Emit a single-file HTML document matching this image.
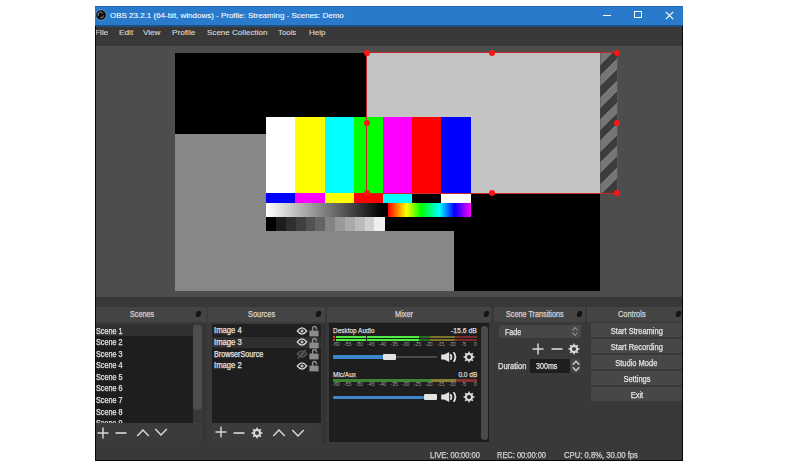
<!DOCTYPE html>
<html><head><meta charset="utf-8">
<style>
#wrap{position:absolute;left:0;top:0;width:800px;height:466px;overflow:hidden;filter:blur(0.45px)}
*{margin:0;padding:0;box-sizing:border-box}
html,body{width:800px;height:466px;overflow:hidden;background:#fff}
body{position:relative;font-family:"Liberation Sans",sans-serif}
.a{position:absolute}
.t{position:absolute;white-space:pre;line-height:1;transform-origin:0 0}
</style></head><body>
<div id="wrap">
<div class="a" style="left:95.00px;top:6.00px;width:588.00px;height:455.00px;background:#393939;"></div>
<div class="a" style="left:95.00px;top:6.00px;width:588.00px;height:20.00px;background:#2a7acb;"></div>
<div class="a" style="left:95.00px;top:6.00px;width:588.00px;height:0.80px;background:#1f67b5;"></div>
<div class="a" style="left:95.00px;top:25.40px;width:588.00px;height:1.20px;background:#1d4f80;"></div>
<svg class="a" style="left:95px;top:9px" width="12" height="12"><circle cx="6" cy="6" r="5.3" fill="#0d0d0d" stroke="#7aa6d8" stroke-width="0.8"/><path d="M4.2 3.2Q6.8 2.6 7.6 4.6M8.6 6.6Q7.6 9 5.2 8.8M3.2 7Q2.6 4.8 4 3.8" fill="none" stroke="#8a8a8a" stroke-width="1.1"/></svg>
<div class="t" style="left:109.75px;top:11.71px;font-size:7.6px;color:#ffffff;transform:scaleX(1.0512);-webkit-text-stroke:0.08px #ffffff;">OBS 23.2.1 (64-bit, windows) - Profile: Streaming - Scenes: Demo</div>
<div class="a" style="left:603.00px;top:14.60px;width:7.80px;height:1.00px;background:#ffffff;"></div>
<div class="a" style="left:633.8px;top:11.4px;width:8px;height:6.6px;border:1px solid #fff"></div>
<svg class="a" style="left:665px;top:10.5px" width="9" height="9"><path d="M0.8 0.8L8.2 8.2M8.2 0.8L0.8 8.2" stroke="#fff" stroke-width="1.1"/></svg>
<div class="a" style="left:95.00px;top:26.60px;width:588.00px;height:19.40px;background:#383838;"></div>
<div class="t" style="left:118.50px;top:28.51px;font-size:8px;color:#d9d9d9;transform:scaleX(1.0301);-webkit-text-stroke:0.12px #d9d9d9;">Edit</div>
<div class="t" style="left:143.00px;top:28.51px;font-size:8px;color:#d9d9d9;transform:scaleX(1.0092);-webkit-text-stroke:0.12px #d9d9d9;">View</div>
<div class="t" style="left:171.70px;top:28.51px;font-size:8px;color:#d9d9d9;transform:scaleX(1.0275);-webkit-text-stroke:0.12px #d9d9d9;">Profile</div>
<div class="t" style="left:206.50px;top:28.51px;font-size:8px;color:#d9d9d9;transform:scaleX(1.0061);-webkit-text-stroke:0.12px #d9d9d9;">Scene Collection</div>
<div class="t" style="left:278.10px;top:28.51px;font-size:8px;color:#d9d9d9;transform:scaleX(0.9789);-webkit-text-stroke:0.12px #d9d9d9;">Tools</div>
<div class="t" style="left:308.50px;top:28.51px;font-size:8px;color:#d9d9d9;transform:scaleX(1.0028);-webkit-text-stroke:0.12px #d9d9d9;">Help</div>
<div class="t" style="left:94.60px;top:28.51px;font-size:8px;color:#d9d9d9;transform:scaleX(1.0395);-webkit-text-stroke:0.12px #d9d9d9;">File</div>
<div class="a" style="left:95.00px;top:46.00px;width:588.00px;height:251.00px;background:#4d4d4d;"></div>
<div class="a" style="left:175.00px;top:53.00px;width:425.40px;height:238.00px;background:#000000;"></div>
<div class="a" style="left:175.00px;top:134.00px;width:279.00px;height:157.00px;background:#878787;"></div>
<div class="a" style="left:367.00px;top:53.00px;width:233.40px;height:140.00px;background:#c4c4c4;"></div>
<div class="a" style="left:600.4px;top:53px;width:16.6px;height:158.3px;clip-path:inset(0 0 18.3px 0);background:repeating-linear-gradient(-45deg,#3c3c3c 0 7.4px,#767676 7.4px 15.4px)"></div>
<div class="a" style="left:266.20px;top:116.60px;width:29.50px;height:76.10px;background:#ffffff;"></div>
<div class="a" style="left:295.40px;top:116.60px;width:29.50px;height:76.10px;background:#ffff00;"></div>
<div class="a" style="left:324.60px;top:116.60px;width:29.50px;height:76.10px;background:#00ffff;"></div>
<div class="a" style="left:353.80px;top:116.60px;width:29.50px;height:76.10px;background:#00ff00;"></div>
<div class="a" style="left:383.00px;top:116.60px;width:29.50px;height:76.10px;background:#ff00ff;"></div>
<div class="a" style="left:412.20px;top:116.60px;width:29.50px;height:76.10px;background:#ff0000;"></div>
<div class="a" style="left:441.40px;top:116.60px;width:29.50px;height:76.10px;background:#0000ff;"></div>
<div class="a" style="left:266.20px;top:192.70px;width:29.50px;height:9.90px;background:#0000ff;"></div>
<div class="a" style="left:295.40px;top:192.70px;width:29.50px;height:9.90px;background:#ff00ff;"></div>
<div class="a" style="left:324.60px;top:192.70px;width:29.50px;height:9.90px;background:#ffff00;"></div>
<div class="a" style="left:353.80px;top:192.70px;width:29.50px;height:9.90px;background:#ff0000;"></div>
<div class="a" style="left:383.00px;top:192.70px;width:29.50px;height:9.90px;background:#00ffff;"></div>
<div class="a" style="left:412.20px;top:192.70px;width:29.50px;height:9.90px;background:#000000;"></div>
<div class="a" style="left:441.40px;top:192.70px;width:29.50px;height:9.90px;background:#ffffff;"></div>
<div class="a" style="left:266.20px;top:202.60px;width:204.40px;height:28.80px;background:#000000;"></div>
<div class="a" style="left:266.20px;top:202.60px;width:117.30px;height:14.00px;background:#fff;background:linear-gradient(90deg,#fff,#000)"></div>
<div class="a" style="left:388.00px;top:202.60px;width:82.60px;height:14.00px;background:#f00;background:linear-gradient(90deg,#f00,#ff0 22%,#0f0 40%,#0ff 62%,#00f 80%,#f0f)"></div>
<div class="a" style="left:266.20px;top:216.80px;width:10.14px;height:14.60px;background:#000;"></div>
<div class="a" style="left:276.04px;top:216.80px;width:10.14px;height:14.60px;background:#1c1c1c;"></div>
<div class="a" style="left:285.88px;top:216.80px;width:10.14px;height:14.60px;background:#2e2e2e;"></div>
<div class="a" style="left:295.73px;top:216.80px;width:10.14px;height:14.60px;background:#404040;"></div>
<div class="a" style="left:305.57px;top:216.80px;width:10.14px;height:14.60px;background:#525252;"></div>
<div class="a" style="left:315.41px;top:216.80px;width:10.14px;height:14.60px;background:#646464;"></div>
<div class="a" style="left:325.25px;top:216.80px;width:10.14px;height:14.60px;background:#838383;"></div>
<div class="a" style="left:335.09px;top:216.80px;width:10.14px;height:14.60px;background:#999;"></div>
<div class="a" style="left:344.93px;top:216.80px;width:10.14px;height:14.60px;background:#aaa;"></div>
<div class="a" style="left:354.77px;top:216.80px;width:10.14px;height:14.60px;background:#bbb;"></div>
<div class="a" style="left:364.62px;top:216.80px;width:10.14px;height:14.60px;background:#d0d0d0;"></div>
<div class="a" style="left:374.46px;top:216.80px;width:10.14px;height:14.60px;background:#eee;"></div>
<div class="a" style="left:366.2px;top:52.2px;width:251.6px;height:141.6px;border:1.7px solid #c82828"></div>
<div class="a" style="left:363.9px;top:49.9px;width:6.2px;height:6.2px;border-radius:50%;background:#ff1414"></div>
<div class="a" style="left:363.9px;top:119.9px;width:6.2px;height:6.2px;border-radius:50%;background:#ff1414"></div>
<div class="a" style="left:363.9px;top:189.9px;width:6.2px;height:6.2px;border-radius:50%;background:#ff1414"></div>
<div class="a" style="left:488.9px;top:49.9px;width:6.2px;height:6.2px;border-radius:50%;background:#ff1414"></div>
<div class="a" style="left:488.9px;top:189.9px;width:6.2px;height:6.2px;border-radius:50%;background:#ff1414"></div>
<div class="a" style="left:613.9px;top:49.9px;width:6.2px;height:6.2px;border-radius:50%;background:#ff1414"></div>
<div class="a" style="left:613.9px;top:119.9px;width:6.2px;height:6.2px;border-radius:50%;background:#ff1414"></div>
<div class="a" style="left:613.9px;top:189.9px;width:6.2px;height:6.2px;border-radius:50%;background:#ff1414"></div>
<div class="a" style="left:95.00px;top:297.00px;width:588.00px;height:9.60px;background:#383838;"></div>
<div class="a" style="left:95.00px;top:307.00px;width:112.00px;height:14.80px;background:#444444;"></div>
<div class="a" style="left:208.00px;top:307.00px;width:116.50px;height:14.80px;background:#444444;"></div>
<div class="a" style="left:326.80px;top:307.00px;width:164.20px;height:14.80px;background:#444444;"></div>
<div class="a" style="left:494.00px;top:307.00px;width:91.00px;height:14.80px;background:#444444;"></div>
<div class="a" style="left:587.00px;top:307.00px;width:95.00px;height:14.80px;background:#444444;"></div>
<div class="t" style="left:129.75px;top:309.86px;font-size:8.3px;color:#d4d4d4;transform:scaleX(0.8669);-webkit-text-stroke:0.25px #d4d4d4;">Scenes</div>
<div class="t" style="left:247.50px;top:309.86px;font-size:8.3px;color:#d4d4d4;transform:scaleX(0.8900);-webkit-text-stroke:0.25px #d4d4d4;">Sources</div>
<div class="t" style="left:395.00px;top:309.86px;font-size:8.3px;color:#d4d4d4;transform:scaleX(0.8872);-webkit-text-stroke:0.25px #d4d4d4;">Mixer</div>
<div class="t" style="left:506.00px;top:309.86px;font-size:8.3px;color:#d4d4d4;transform:scaleX(0.8731);-webkit-text-stroke:0.25px #d4d4d4;">Scene Transitions</div>
<div class="t" style="left:618.00px;top:309.86px;font-size:8.3px;color:#d4d4d4;transform:scaleX(0.8930);-webkit-text-stroke:0.25px #d4d4d4;">Controls</div>
<div class="a" style="left:196.3px;top:310.8px;width:4.8px;height:6px;background:#141414;border-radius:2px;transform:skewX(-12deg)"></div>
<div class="a" style="left:315.5px;top:310.8px;width:4.8px;height:6px;background:#141414;border-radius:2px;transform:skewX(-12deg)"></div>
<div class="a" style="left:483.9px;top:310.8px;width:4.8px;height:6px;background:#141414;border-radius:2px;transform:skewX(-12deg)"></div>
<div class="a" style="left:576.6px;top:310.8px;width:4.8px;height:6px;background:#141414;border-radius:2px;transform:skewX(-12deg)"></div>
<div class="a" style="left:676.2px;top:310.8px;width:4.8px;height:6px;background:#141414;border-radius:2px;transform:skewX(-12deg)"></div>
<div class="a" style="left:95.00px;top:323.60px;width:97.60px;height:99.40px;background:#1e1e1e;"></div>
<div class="a" style="left:95.00px;top:323.60px;width:97.60px;height:12.90px;background:#303030;"></div>
<div class="a" style="left:95px;top:323px;width:97.6px;height:100px;overflow:hidden">
<div class="t" style="left:1.00px;top:3.86px;font-size:8.3px;color:#e3e3e3;transform:scaleX(0.8734);-webkit-text-stroke:0.25px #e3e3e3;">Scene 1</div>
<div class="t" style="left:1.00px;top:14.86px;font-size:8.3px;color:#e3e3e3;transform:scaleX(0.8734);-webkit-text-stroke:0.25px #e3e3e3;">Scene 2</div>
<div class="t" style="left:1.00px;top:26.86px;font-size:8.3px;color:#e3e3e3;transform:scaleX(0.8734);-webkit-text-stroke:0.25px #e3e3e3;">Scene 3</div>
<div class="t" style="left:1.00px;top:37.86px;font-size:8.3px;color:#e3e3e3;transform:scaleX(0.8734);-webkit-text-stroke:0.25px #e3e3e3;">Scene 4</div>
<div class="t" style="left:1.00px;top:49.86px;font-size:8.3px;color:#e3e3e3;transform:scaleX(0.8734);-webkit-text-stroke:0.25px #e3e3e3;">Scene 5</div>
<div class="t" style="left:1.00px;top:60.86px;font-size:8.3px;color:#e3e3e3;transform:scaleX(0.8734);-webkit-text-stroke:0.25px #e3e3e3;">Scene 6</div>
<div class="t" style="left:1.00px;top:72.86px;font-size:8.3px;color:#e3e3e3;transform:scaleX(0.8734);-webkit-text-stroke:0.25px #e3e3e3;">Scene 7</div>
<div class="t" style="left:1.00px;top:84.86px;font-size:8.3px;color:#e3e3e3;transform:scaleX(0.8734);-webkit-text-stroke:0.25px #e3e3e3;">Scene 8</div>
<div class="t" style="left:1.00px;top:95.86px;font-size:8.3px;color:#e3e3e3;transform:scaleX(0.8734);-webkit-text-stroke:0.25px #e3e3e3;">Scene 9</div>
</div>
<div class="a" style="left:192.60px;top:323.60px;width:9.90px;height:99.40px;background:#383838;"></div>
<div class="a" style="left:192.80px;top:325.00px;width:9.00px;height:84.80px;background:#4d4d4d;border-radius:4px"></div>
<div class="a" style="left:95.00px;top:423.00px;width:107.50px;height:18.50px;background:#3b3b3b;"></div>
<div class="a" style="left:202.50px;top:323.60px;width:1.00px;height:117.90px;background:#303030;"></div>
<div class="a" style="left:211.60px;top:323.70px;width:109.00px;height:99.30px;background:#1e1e1e;"></div>
<div class="a" style="left:211.60px;top:323.70px;width:109.00px;height:12.10px;background:#212121;"></div>
<div class="a" style="left:211.60px;top:336.50px;width:109.00px;height:11.30px;background:#2f2f2f;"></div>
<div class="t" style="left:214.20px;top:325.86px;font-size:8.3px;color:#e3e3e3;transform:scaleX(0.9253);-webkit-text-stroke:0.25px #e3e3e3;">Image 4</div>
<div class="t" style="left:214.20px;top:337.86px;font-size:8.3px;color:#e3e3e3;transform:scaleX(0.9253);-webkit-text-stroke:0.25px #e3e3e3;">Image 3</div>
<div class="t" style="left:214.20px;top:349.86px;font-size:8.3px;color:#e3e3e3;transform:scaleX(0.8689);-webkit-text-stroke:0.25px #e3e3e3;">BrowserSource</div>
<div class="t" style="left:214.20px;top:360.86px;font-size:8.3px;color:#e3e3e3;transform:scaleX(0.9253);-webkit-text-stroke:0.25px #e3e3e3;">Image 2</div>
<div class="a" style="left:211.40px;top:423.00px;width:109.35px;height:18.50px;background:#3b3b3b;"></div>
<div class="a" style="left:329.30px;top:323.40px;width:159.45px;height:118.80px;background:#1e1e1e;"></div>
<div class="a" style="left:480.60px;top:326.00px;width:7.20px;height:114.00px;background:#4a4a4a;border-radius:3.5px"></div>
<div class="a" style="left:202.60px;top:323.60px;width:3.20px;height:118.40px;background:#353535;"></div>
<div class="a" style="left:322.40px;top:323.60px;width:3.40px;height:118.40px;background:#333333;"></div>
<div class="a" style="left:95.00px;top:26.00px;width:1.20px;height:435.00px;background:#050505;"></div>
<div class="a" style="left:681.80px;top:26.00px;width:1.20px;height:435.00px;background:#050505;"></div>
<div class="a" style="left:95.00px;top:459.70px;width:588.00px;height:1.30px;background:#050505;"></div>
<svg class="a" style="left:95.8px;top:425.5px" width="14" height="14"><path d="M1.5 7H12.5M7 1.5V12.5" stroke="#d8d8d8" stroke-width="1.45"/></svg>
<svg class="a" style="left:113.5px;top:425.5px" width="14" height="14"><path d="M1.5 7H12.5" stroke="#d8d8d8" stroke-width="1.6"/></svg>
<svg class="a" style="left:135.7px;top:425.5px" width="14" height="14"><path d="M1.25 10.00L7 4.00L12.75 10.00" fill="none" stroke="#d8d8d8" stroke-width="1.45"/></svg>
<svg class="a" style="left:153.7px;top:425.0px" width="14" height="14"><path d="M1.25 4.00L7 10.00L12.75 4.00" fill="none" stroke="#d8d8d8" stroke-width="1.45"/></svg>
<svg class="a" style="left:214.3px;top:425.2px" width="14" height="14"><path d="M1.5 7H12.5M7 1.5V12.5" stroke="#d8d8d8" stroke-width="1.45"/></svg>
<svg class="a" style="left:232.0px;top:425.6px" width="14" height="14"><path d="M1.5 7H12.5" stroke="#d8d8d8" stroke-width="1.6"/></svg>
<svg class="a" style="left:250.4px;top:425.6px" width="14" height="14"><path d="M6.04 3.01 L6.52 1.42 L7.48 1.42 L7.96 3.01 L9.14 3.50 L10.60 2.71 L11.29 3.40 L10.50 4.86 L10.99 6.04 L12.58 6.52 L12.58 7.48 L10.99 7.96 L10.50 9.14 L11.29 10.60 L10.60 11.29 L9.14 10.50 L7.96 10.99 L7.48 12.58 L6.52 12.58 L6.04 10.99 L4.86 10.50 L3.40 11.29 L2.71 10.60 L3.50 9.14 L3.01 7.96 L1.42 7.48 L1.42 6.52 L3.01 6.04 L3.50 4.86 L2.71 3.40 L3.40 2.71 L4.86 3.50Z M9.0 7 A2.0 2.0 0 1 0 5.0 7 A2.0 2.0 0 1 0 9.0 7Z" fill="#d8d8d8" fill-rule="evenodd"/></svg>
<svg class="a" style="left:272.2px;top:426.0px" width="14" height="14"><path d="M1.25 10.00L7 4.00L12.75 10.00" fill="none" stroke="#d8d8d8" stroke-width="1.45"/></svg>
<svg class="a" style="left:290.5px;top:425.7px" width="14" height="14"><path d="M1.25 4.00L7 10.00L12.75 4.00" fill="none" stroke="#d8d8d8" stroke-width="1.45"/></svg>
<svg class="a" style="left:294.9px;top:325.8px" width="14" height="10"><path d="M1.4 5Q7 -2.4 12.6 5Q7 12.4 1.4 5Z" fill="#e0e0e0"/><path d="M3.2 5Q7 0.2 10.8 5Q7 9.8 3.2 5Z" fill="#262626"/><circle cx="7" cy="5" r="2.0" fill="#6a6a6a"/><circle cx="7" cy="5" r="0.9" fill="#e0e0e0"/></svg>
<svg class="a" style="left:309.0px;top:325.0px" width="10" height="12"><path d="M3.6 6V3.4A1.9 1.9 0 0 1 7.4 3.4V4.4" fill="none" stroke="#8c8c8c" stroke-width="1.5"/><rect x="0.4" y="5.6" width="9.2" height="5.8" fill="#8c8c8c"/></svg>
<svg class="a" style="left:294.9px;top:337.4px" width="14" height="10"><path d="M1.4 5Q7 -2.4 12.6 5Q7 12.4 1.4 5Z" fill="#e0e0e0"/><path d="M3.2 5Q7 0.2 10.8 5Q7 9.8 3.2 5Z" fill="#262626"/><circle cx="7" cy="5" r="2.0" fill="#6a6a6a"/><circle cx="7" cy="5" r="0.9" fill="#e0e0e0"/></svg>
<svg class="a" style="left:309.0px;top:336.6px" width="10" height="12"><path d="M3.6 6V3.4A1.9 1.9 0 0 1 7.4 3.4V4.4" fill="none" stroke="#8c8c8c" stroke-width="1.5"/><rect x="0.4" y="5.6" width="9.2" height="5.8" fill="#8c8c8c"/></svg>
<svg class="a" style="left:294.9px;top:349.0px" width="14" height="10"><path d="M1.4 5Q7 -2.4 12.6 5Q7 12.4 1.4 5Z" fill="#5a5a5a"/><path d="M3.2 5Q7 0.2 10.8 5Q7 9.8 3.2 5Z" fill="#262626"/><circle cx="7" cy="5" r="2.0" fill="#3a3a3a"/><circle cx="7" cy="5" r="0.9" fill="#5a5a5a"/><path d="M3 9.5L11 0.8" stroke="#5a5a5a" stroke-width="1.3"/></svg>
<svg class="a" style="left:309.0px;top:348.2px" width="10" height="12"><path d="M3.6 6V3.4A1.9 1.9 0 0 1 7.4 3.4V4.4" fill="none" stroke="#8c8c8c" stroke-width="1.5"/><rect x="0.4" y="5.6" width="9.2" height="5.8" fill="#8c8c8c"/></svg>
<svg class="a" style="left:294.9px;top:360.6px" width="14" height="10"><path d="M1.4 5Q7 -2.4 12.6 5Q7 12.4 1.4 5Z" fill="#e0e0e0"/><path d="M3.2 5Q7 0.2 10.8 5Q7 9.8 3.2 5Z" fill="#262626"/><circle cx="7" cy="5" r="2.0" fill="#6a6a6a"/><circle cx="7" cy="5" r="0.9" fill="#e0e0e0"/></svg>
<svg class="a" style="left:309.0px;top:359.8px" width="10" height="12"><path d="M3.6 6V3.4A1.9 1.9 0 0 1 7.4 3.4V4.4" fill="none" stroke="#8c8c8c" stroke-width="1.5"/><rect x="0.4" y="5.6" width="9.2" height="5.8" fill="#8c8c8c"/></svg>
<div class="t" style="left:333.00px;top:326.81px;font-size:7.4px;color:#dcdcdc;transform:scaleX(0.8727);-webkit-text-stroke:0.25px #dcdcdc;">Desktop Audio</div>
<div class="t" style="left:449.03px;top:326.81px;font-size:7.4px;color:#dcdcdc;transform-origin:100% 0;transform:scaleX(0.9294);-webkit-text-stroke:0.25px #dcdcdc;">-15.6 dB</div>
<div class="a" style="left:332.80px;top:335.70px;width:2.50px;height:2.70px;background:#e03a3a;"></div>
<div class="a" style="left:336.20px;top:335.70px;width:29.50px;height:2.70px;background:#4ded42;"></div>
<div class="a" style="left:367.40px;top:335.70px;width:51.90px;height:2.70px;background:#4ded42;"></div>
<div class="a" style="left:419.30px;top:335.70px;width:10.70px;height:2.70px;background:#2c6a28;"></div>
<div class="a" style="left:430.00px;top:335.70px;width:25.00px;height:2.70px;background:#7a7228;"></div>
<div class="a" style="left:455.00px;top:335.70px;width:22.00px;height:2.70px;background:#7a2a2a;"></div>
<div class="a" style="left:332.80px;top:338.90px;width:2.50px;height:2.60px;background:#e03a3a;"></div>
<div class="a" style="left:336.20px;top:338.90px;width:29.50px;height:2.60px;background:#4ded42;"></div>
<div class="a" style="left:367.40px;top:338.90px;width:51.90px;height:2.60px;background:#4ded42;"></div>
<div class="a" style="left:419.30px;top:338.90px;width:10.70px;height:2.60px;background:#2c6a28;"></div>
<div class="a" style="left:430.00px;top:338.90px;width:25.00px;height:2.60px;background:#7a7228;"></div>
<div class="a" style="left:455.00px;top:338.90px;width:22.00px;height:2.60px;background:#7a2a2a;"></div>
<div class="a" style="left:335.60px;top:341.60px;width:0.80px;height:1.80px;background:#8a8a8a;"></div>
<div class="t" style="left:332.24px;top:342.41px;font-size:5.2px;color:#949494;transform-origin:50% 0;transform:scaleX(1.0000);">-60</div>
<div class="a" style="left:347.22px;top:341.60px;width:0.80px;height:1.80px;background:#8a8a8a;"></div>
<div class="t" style="left:343.86px;top:342.41px;font-size:5.2px;color:#949494;transform-origin:50% 0;transform:scaleX(1.0000);">-55</div>
<div class="a" style="left:358.84px;top:341.60px;width:0.80px;height:1.80px;background:#8a8a8a;"></div>
<div class="t" style="left:355.48px;top:342.41px;font-size:5.2px;color:#949494;transform-origin:50% 0;transform:scaleX(1.0000);">-50</div>
<div class="a" style="left:370.46px;top:341.60px;width:0.80px;height:1.80px;background:#8a8a8a;"></div>
<div class="t" style="left:367.10px;top:342.41px;font-size:5.2px;color:#949494;transform-origin:50% 0;transform:scaleX(1.0000);">-45</div>
<div class="a" style="left:382.08px;top:341.60px;width:0.80px;height:1.80px;background:#8a8a8a;"></div>
<div class="t" style="left:378.72px;top:342.41px;font-size:5.2px;color:#949494;transform-origin:50% 0;transform:scaleX(1.0000);">-40</div>
<div class="a" style="left:393.70px;top:341.60px;width:0.80px;height:1.80px;background:#8a8a8a;"></div>
<div class="t" style="left:390.34px;top:342.41px;font-size:5.2px;color:#949494;transform-origin:50% 0;transform:scaleX(1.0000);">-35</div>
<div class="a" style="left:405.32px;top:341.60px;width:0.80px;height:1.80px;background:#8a8a8a;"></div>
<div class="t" style="left:401.96px;top:342.41px;font-size:5.2px;color:#949494;transform-origin:50% 0;transform:scaleX(1.0000);">-30</div>
<div class="a" style="left:416.94px;top:341.60px;width:0.80px;height:1.80px;background:#8a8a8a;"></div>
<div class="t" style="left:413.58px;top:342.41px;font-size:5.2px;color:#949494;transform-origin:50% 0;transform:scaleX(1.0000);">-25</div>
<div class="a" style="left:428.56px;top:341.60px;width:0.80px;height:1.80px;background:#8a8a8a;"></div>
<div class="t" style="left:425.20px;top:342.41px;font-size:5.2px;color:#949494;transform-origin:50% 0;transform:scaleX(1.0000);">-20</div>
<div class="a" style="left:440.18px;top:341.60px;width:0.80px;height:1.80px;background:#8a8a8a;"></div>
<div class="t" style="left:436.82px;top:342.41px;font-size:5.2px;color:#949494;transform-origin:50% 0;transform:scaleX(1.0000);">-15</div>
<div class="a" style="left:451.80px;top:341.60px;width:0.80px;height:1.80px;background:#8a8a8a;"></div>
<div class="t" style="left:448.44px;top:342.41px;font-size:5.2px;color:#949494;transform-origin:50% 0;transform:scaleX(1.0000);">-10</div>
<div class="a" style="left:463.42px;top:341.60px;width:0.80px;height:1.80px;background:#8a8a8a;"></div>
<div class="t" style="left:461.51px;top:342.41px;font-size:5.2px;color:#949494;transform-origin:50% 0;transform:scaleX(1.0000);">-5</div>
<div class="a" style="left:475.04px;top:341.60px;width:0.80px;height:1.80px;background:#8a8a8a;"></div>
<div class="t" style="left:473.99px;top:342.41px;font-size:5.2px;color:#949494;transform-origin:50% 0;transform:scaleX(1.0000);">0</div>
<div class="a" style="left:333.00px;top:355.00px;width:50.50px;height:3.50px;background:#3d85cc;border-radius:1px"></div>
<div class="a" style="left:396.00px;top:355.60px;width:41.30px;height:2.50px;background:#4a4a4a;"></div>
<div class="a" style="left:383.10px;top:353.50px;width:12.90px;height:6.30px;background:#e2e2e2;border-radius:1px"></div>
<svg class="a" style="left:440.0px;top:350.8px" width="18" height="12"><path d="M1.2 3.6H4.2L9.2 1V11L4.2 8.4H1.2Z" fill="#e2e2e2"/><path d="M10.4 3.2Q12.6 6 10.4 8.8" fill="none" stroke="#e2e2e2" stroke-width="1.7"/><path d="M13.6 1.2Q17.2 6 13.6 10.8" fill="none" stroke="#e2e2e2" stroke-width="1.8"/></svg>
<svg class="a" style="left:461.9px;top:349.6px" width="14" height="14"><path d="M6.04 3.01 L6.52 1.42 L7.48 1.42 L7.96 3.01 L9.14 3.50 L10.60 2.71 L11.29 3.40 L10.50 4.86 L10.99 6.04 L12.58 6.52 L12.58 7.48 L10.99 7.96 L10.50 9.14 L11.29 10.60 L10.60 11.29 L9.14 10.50 L7.96 10.99 L7.48 12.58 L6.52 12.58 L6.04 10.99 L4.86 10.50 L3.40 11.29 L2.71 10.60 L3.50 9.14 L3.01 7.96 L1.42 7.48 L1.42 6.52 L3.01 6.04 L3.50 4.86 L2.71 3.40 L3.40 2.71 L4.86 3.50Z M9.0 7 A2.0 2.0 0 1 0 5.0 7 A2.0 2.0 0 1 0 9.0 7Z" fill="#d8d8d8" fill-rule="evenodd"/></svg>
<div class="t" style="left:333.00px;top:370.81px;font-size:7.4px;color:#dcdcdc;transform:scaleX(0.8740);-webkit-text-stroke:0.25px #dcdcdc;">Mic/Aux</div>
<div class="t" style="left:455.61px;top:370.81px;font-size:7.4px;color:#dcdcdc;transform-origin:100% 0;transform:scaleX(0.8881);-webkit-text-stroke:0.25px #dcdcdc;">0.0 dB</div>
<div class="a" style="left:332.80px;top:378.60px;width:98.20px;height:3.00px;background:#3c8532;"></div>
<div class="a" style="left:431.00px;top:378.60px;width:24.50px;height:3.00px;background:#858036;"></div>
<div class="a" style="left:455.50px;top:378.60px;width:21.50px;height:3.00px;background:#853232;"></div>
<div class="a" style="left:335.60px;top:381.60px;width:0.80px;height:1.80px;background:#8a8a8a;"></div>
<div class="t" style="left:332.24px;top:382.41px;font-size:5.2px;color:#949494;transform-origin:50% 0;transform:scaleX(1.0000);">-60</div>
<div class="a" style="left:347.22px;top:381.60px;width:0.80px;height:1.80px;background:#8a8a8a;"></div>
<div class="t" style="left:343.86px;top:382.41px;font-size:5.2px;color:#949494;transform-origin:50% 0;transform:scaleX(1.0000);">-55</div>
<div class="a" style="left:358.84px;top:381.60px;width:0.80px;height:1.80px;background:#8a8a8a;"></div>
<div class="t" style="left:355.48px;top:382.41px;font-size:5.2px;color:#949494;transform-origin:50% 0;transform:scaleX(1.0000);">-50</div>
<div class="a" style="left:370.46px;top:381.60px;width:0.80px;height:1.80px;background:#8a8a8a;"></div>
<div class="t" style="left:367.10px;top:382.41px;font-size:5.2px;color:#949494;transform-origin:50% 0;transform:scaleX(1.0000);">-45</div>
<div class="a" style="left:382.08px;top:381.60px;width:0.80px;height:1.80px;background:#8a8a8a;"></div>
<div class="t" style="left:378.72px;top:382.41px;font-size:5.2px;color:#949494;transform-origin:50% 0;transform:scaleX(1.0000);">-40</div>
<div class="a" style="left:393.70px;top:381.60px;width:0.80px;height:1.80px;background:#8a8a8a;"></div>
<div class="t" style="left:390.34px;top:382.41px;font-size:5.2px;color:#949494;transform-origin:50% 0;transform:scaleX(1.0000);">-35</div>
<div class="a" style="left:405.32px;top:381.60px;width:0.80px;height:1.80px;background:#8a8a8a;"></div>
<div class="t" style="left:401.96px;top:382.41px;font-size:5.2px;color:#949494;transform-origin:50% 0;transform:scaleX(1.0000);">-30</div>
<div class="a" style="left:416.94px;top:381.60px;width:0.80px;height:1.80px;background:#8a8a8a;"></div>
<div class="t" style="left:413.58px;top:382.41px;font-size:5.2px;color:#949494;transform-origin:50% 0;transform:scaleX(1.0000);">-25</div>
<div class="a" style="left:428.56px;top:381.60px;width:0.80px;height:1.80px;background:#8a8a8a;"></div>
<div class="t" style="left:425.20px;top:382.41px;font-size:5.2px;color:#949494;transform-origin:50% 0;transform:scaleX(1.0000);">-20</div>
<div class="a" style="left:440.18px;top:381.60px;width:0.80px;height:1.80px;background:#8a8a8a;"></div>
<div class="t" style="left:436.82px;top:382.41px;font-size:5.2px;color:#949494;transform-origin:50% 0;transform:scaleX(1.0000);">-15</div>
<div class="a" style="left:451.80px;top:381.60px;width:0.80px;height:1.80px;background:#8a8a8a;"></div>
<div class="t" style="left:448.44px;top:382.41px;font-size:5.2px;color:#949494;transform-origin:50% 0;transform:scaleX(1.0000);">-10</div>
<div class="a" style="left:463.42px;top:381.60px;width:0.80px;height:1.80px;background:#8a8a8a;"></div>
<div class="t" style="left:461.51px;top:382.41px;font-size:5.2px;color:#949494;transform-origin:50% 0;transform:scaleX(1.0000);">-5</div>
<div class="a" style="left:475.04px;top:381.60px;width:0.80px;height:1.80px;background:#8a8a8a;"></div>
<div class="t" style="left:473.99px;top:382.41px;font-size:5.2px;color:#949494;transform-origin:50% 0;transform:scaleX(1.0000);">0</div>
<div class="a" style="left:333.00px;top:395.60px;width:91.00px;height:3.00px;background:#3d85cc;border-radius:1px"></div>
<div class="a" style="left:423.60px;top:394.20px;width:13.40px;height:6.20px;background:#e2e2e2;border-radius:1px"></div>
<svg class="a" style="left:440.0px;top:391.3px" width="18" height="12"><path d="M1.2 3.6H4.2L9.2 1V11L4.2 8.4H1.2Z" fill="#e2e2e2"/><path d="M10.4 3.2Q12.6 6 10.4 8.8" fill="none" stroke="#e2e2e2" stroke-width="1.7"/><path d="M13.6 1.2Q17.2 6 13.6 10.8" fill="none" stroke="#e2e2e2" stroke-width="1.8"/></svg>
<svg class="a" style="left:461.9px;top:390.2px" width="14" height="14"><path d="M6.04 3.01 L6.52 1.42 L7.48 1.42 L7.96 3.01 L9.14 3.50 L10.60 2.71 L11.29 3.40 L10.50 4.86 L10.99 6.04 L12.58 6.52 L12.58 7.48 L10.99 7.96 L10.50 9.14 L11.29 10.60 L10.60 11.29 L9.14 10.50 L7.96 10.99 L7.48 12.58 L6.52 12.58 L6.04 10.99 L4.86 10.50 L3.40 11.29 L2.71 10.60 L3.50 9.14 L3.01 7.96 L1.42 7.48 L1.42 6.52 L3.01 6.04 L3.50 4.86 L2.71 3.40 L3.40 2.71 L4.86 3.50Z M9.0 7 A2.0 2.0 0 1 0 5.0 7 A2.0 2.0 0 1 0 9.0 7Z" fill="#d8d8d8" fill-rule="evenodd"/></svg>
<div class="a" style="left:498.50px;top:324.90px;width:82.70px;height:12.70px;background:#464646;border-radius:1.5px"></div>
<div class="a" style="left:569.60px;top:324.90px;width:11.60px;height:12.70px;background:#4a4a4a;border-radius:1.5px"></div>
<div class="t" style="left:504.90px;top:327.86px;font-size:8.3px;color:#e3e3e3;transform:scaleX(0.8563);-webkit-text-stroke:0.25px #e3e3e3;">Fade</div>
<svg class="a" style="left:568.3px;top:322.2px" width="14" height="14"><path d="M4.50 8.30L7 5.70L9.50 8.30" fill="none" stroke="#8a8a8a" stroke-width="1.2"/></svg>
<svg class="a" style="left:568.3px;top:326.8px" width="14" height="14"><path d="M4.50 5.70L7 8.30L9.50 5.70" fill="none" stroke="#8a8a8a" stroke-width="1.2"/></svg>
<svg class="a" style="left:531.2px;top:341.9px" width="14" height="14"><path d="M1.5 7H12.5M7 1.5V12.5" stroke="#d8d8d8" stroke-width="1.45"/></svg>
<svg class="a" style="left:549.5px;top:341.9px" width="14" height="14"><path d="M1.5 7H12.5" stroke="#d8d8d8" stroke-width="1.6"/></svg>
<svg class="a" style="left:567.4px;top:341.6px" width="14" height="14"><path d="M6.04 3.01 L6.52 1.42 L7.48 1.42 L7.96 3.01 L9.14 3.50 L10.60 2.71 L11.29 3.40 L10.50 4.86 L10.99 6.04 L12.58 6.52 L12.58 7.48 L10.99 7.96 L10.50 9.14 L11.29 10.60 L10.60 11.29 L9.14 10.50 L7.96 10.99 L7.48 12.58 L6.52 12.58 L6.04 10.99 L4.86 10.50 L3.40 11.29 L2.71 10.60 L3.50 9.14 L3.01 7.96 L1.42 7.48 L1.42 6.52 L3.01 6.04 L3.50 4.86 L2.71 3.40 L3.40 2.71 L4.86 3.50Z M9.0 7 A2.0 2.0 0 1 0 5.0 7 A2.0 2.0 0 1 0 9.0 7Z" fill="#d8d8d8" fill-rule="evenodd"/></svg>
<div class="t" style="left:497.90px;top:361.86px;font-size:8.3px;color:#e3e3e3;transform:scaleX(0.9053);-webkit-text-stroke:0.25px #e3e3e3;">Duration</div>
<div class="a" style="left:529.80px;top:358.90px;width:39.80px;height:14.10px;background:#1e1e1e;"></div>
<div class="t" style="left:535.60px;top:361.86px;font-size:8.3px;color:#e3e3e3;transform:scaleX(0.8590);-webkit-text-stroke:0.25px #e3e3e3;">300ms</div>
<div class="a" style="left:570.30px;top:358.60px;width:10.90px;height:14.20px;background:#434343;border-radius:2px"></div>
<svg class="a" style="left:568.6px;top:356.3px" width="14" height="14"><path d="M3.75 8.70L7 5.30L10.25 8.70" fill="none" stroke="#cfcfcf" stroke-width="1.4"/></svg>
<svg class="a" style="left:568.6px;top:362.3px" width="14" height="14"><path d="M3.75 5.30L7 8.70L10.25 5.30" fill="none" stroke="#cfcfcf" stroke-width="1.4"/></svg>
<div class="a" style="left:590.80px;top:323.40px;width:91.20px;height:13.90px;background:#474747;"></div>
<div class="t" style="left:607.77px;top:326.86px;font-size:8.3px;color:#e3e3e3;transform-origin:50% 0;transform:scaleX(0.9018);-webkit-text-stroke:0.25px #e3e3e3;">Start Streaming</div>
<div class="a" style="left:590.80px;top:339.25px;width:91.20px;height:13.90px;background:#474747;"></div>
<div class="t" style="left:607.77px;top:342.86px;font-size:8.3px;color:#e3e3e3;transform-origin:50% 0;transform:scaleX(0.9018);-webkit-text-stroke:0.25px #e3e3e3;">Start Recording</div>
<div class="a" style="left:590.80px;top:355.10px;width:91.20px;height:13.90px;background:#474747;"></div>
<div class="t" style="left:613.30px;top:358.86px;font-size:8.3px;color:#e3e3e3;transform-origin:50% 0;transform:scaleX(0.9018);-webkit-text-stroke:0.25px #e3e3e3;">Studio Mode</div>
<div class="a" style="left:590.80px;top:370.95px;width:91.20px;height:13.90px;background:#474747;"></div>
<div class="t" style="left:621.60px;top:374.86px;font-size:8.3px;color:#e3e3e3;transform-origin:50% 0;transform:scaleX(0.9018);-webkit-text-stroke:0.25px #e3e3e3;">Settings</div>
<div class="a" style="left:590.80px;top:386.80px;width:91.20px;height:13.90px;background:#474747;"></div>
<div class="t" style="left:629.68px;top:390.86px;font-size:8.3px;color:#e3e3e3;transform-origin:50% 0;transform:scaleX(0.9018);-webkit-text-stroke:0.25px #e3e3e3;">Exit</div>
<div class="t" style="left:429.60px;top:450.86px;font-size:8.3px;color:#d2d2d2;transform:scaleX(0.9087);-webkit-text-stroke:0.25px #d2d2d2;">LIVE: 00:00:00</div>
<div class="t" style="left:497.00px;top:450.86px;font-size:8.3px;color:#d2d2d2;transform:scaleX(0.9000);-webkit-text-stroke:0.25px #d2d2d2;">REC: 00:00:00</div>
<div class="t" style="left:564.00px;top:450.86px;font-size:8.3px;color:#d2d2d2;transform:scaleX(0.9271);-webkit-text-stroke:0.25px #d2d2d2;">CPU: 0.8%, 30.00 fps</div>
</div>
</body></html>
